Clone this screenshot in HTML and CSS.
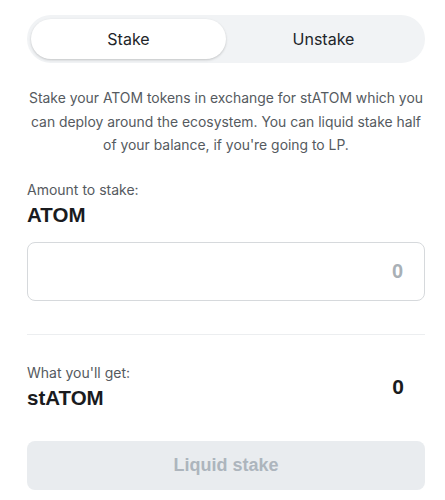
FILE: index.html
```html
<!DOCTYPE html>
<html>
<head>
<meta charset="utf-8">
<link rel="stylesheet" href="styles.css">
</head>
<body>
<div class="panel">
  <div class="tabs">
    <button class="tab active">Stake</button>
    <button class="tab">Unstake</button>
  </div>
  <p class="desc">Stake your ATOM tokens in exchange for stATOM which you can deploy around the ecosystem. You can liquid stake half of your balance, if you're going to LP.</p>
  <div class="field">
    <div class="label">Amount to stake:</div>
    <div class="token">ATOM</div>
  </div>
  <div class="input"><span class="placeholder">0</span></div>
  <div class="divider"></div>
  <div class="get">
    <div>
      <div class="label">What you'll get:</div>
      <div class="token">stATOM</div>
    </div>
    <div class="amount">0</div>
  </div>
  <button class="submit">Liquid stake</button>
</div>
</body>
</html>
```
FILE: styles.css
```css
html, body { margin: 0; padding: 0; background: #fff; }
body { font-family: Inter, "Noto Sans", sans-serif; color: #212529; }
.panel { width: 398px; margin-left: 27px; padding-top: 15px; display: flex; flex-direction: column; }
.tabs { display: flex; background: #f1f3f5; border-radius: 24px; padding: 4px; height: 40px; }
.tab { flex: 1; border: none; background: transparent; font-family: Inter, sans-serif; font-size: 16px; color: #212529; border-radius: 20px; cursor: pointer; padding: 0; }
.tab.active { background: #fff; box-shadow: 0 1px 3px rgba(0,0,0,0.12), 0 1px 2px rgba(0,0,0,0.08); }
.desc { margin: 24px -1px 0; text-align: center; font-size: 13.9px; line-height: 23.5px; color: #555a60; }
.field { margin-top: 23px; }
.label { font-size: 14px; color: #555a60; line-height: 18px; }
.token { font-family: "Liberation Sans", Arial, sans-serif; font-weight: bold; font-size: 20.5px; line-height: 24px; margin-top: 4px; color: #1a1b1e; }
.input { margin-top: 15px; height: 57px; border: 1px solid #d6d9dc; border-radius: 8px; display: flex; align-items: center; justify-content: flex-end; padding-right: 21px; }
.placeholder { font-family: "Liberation Sans", Arial, sans-serif; font-weight: bold; font-size: 20px; color: #a9b0b6; }
.divider { margin-top: 33px; height: 1px; background: #eceef0; }
.get { margin-top: 29px; display: flex; justify-content: space-between; align-items: center; }
.amount { font-family: "Liberation Sans", Arial, sans-serif; font-weight: bold; font-size: 21px; color: #1a1b1e; padding-right: 21px; }
.submit { margin-top: 31px; height: 49px; border: none; border-radius: 8px; background: #e9ecef; color: #adb5bd; font-family: "Liberation Sans", Arial, sans-serif; font-weight: bold; font-size: 18px; padding: 0; }
```
